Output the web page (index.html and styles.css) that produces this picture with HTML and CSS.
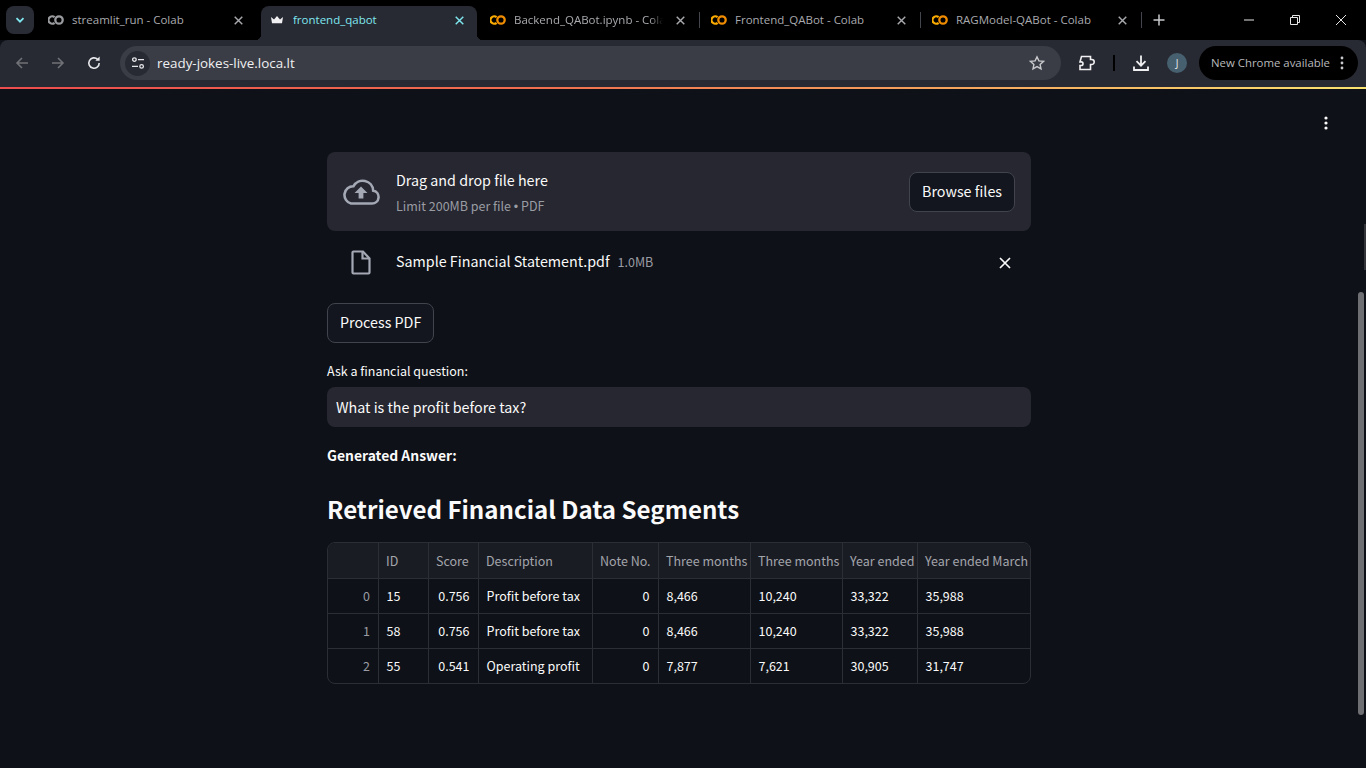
FILE: index.html
```html
<!DOCTYPE html>
<html lang="en">
<head>
    <meta charset="UTF-8">
    <meta name="viewport" content="width=device-width, initial-scale=1.0">
    <title>frontend_qabot</title>
    <link rel="stylesheet" href="styles.css">
</head>
<body>
    <div class="tabstrip">
        <button class="tab-search">
            <svg width="12" height="12" viewBox="0 0 12 12"><path d="M2.500 4.200 6 7.700l3.500-3.500" fill="none" stroke="#7fe7f0" stroke-width="1.800"/></svg>
        </button>
        <div class="tab">
            <svg class="colab" width="16" height="16" viewBox="0 0 16 10"><g fill="none" stroke="#9a9b9f" stroke-width="2.300"><path d="M6.600 2.200A3.700 3.700 0 1 0 6.600 7.800"/><circle cx="11" cy="5" r="3.700"/></g></svg>
            <span class="tab-title">streamlit_run - Colab</span>
            <svg class="tab-x" width="9" height="9" viewBox="0 0 10 10"><path d="M.8.800l8.400 8.400M9.200.800.800 9.200" stroke="#a9aaae" stroke-width="1.600"/></svg>
        </div>
        <div class="tab active">
            <svg class="crown" width="14" height="14" viewBox="0 0 14 14"><path d="M1 4l3 2.600L7 3l3 3.600L13 4l-1 6.200H2z" fill="#f0f0f2"/></svg>
            <span class="tab-title">frontend_qabot</span>
            <svg class="tab-x" width="9" height="9" viewBox="0 0 10 10"><path d="M.8.800l8.400 8.400M9.200.800.800 9.200" stroke="#7fe7f0" stroke-width="1.600"/></svg>
        </div>
        <div class="tab sep">
            <svg class="colab" width="16" height="16" viewBox="0 0 16 10"><g fill="none" stroke-width="2.300"><path d="M6.600 2.200A3.700 3.700 0 1 0 6.600 7.800" stroke="#f9ab00"/><circle cx="11" cy="5" r="3.700" stroke="#f08c00"/></g></svg>
            <span class="tab-title fade">Backend_QABot.ipynb - Colab</span>
            <svg class="tab-x" width="9" height="9" viewBox="0 0 10 10"><path d="M.8.800l8.400 8.400M9.200.800.800 9.200" stroke="#a9aaae" stroke-width="1.600"/></svg>
        </div>
        <div class="tab sep">
            <svg class="colab" width="16" height="16" viewBox="0 0 16 10"><g fill="none" stroke-width="2.300"><path d="M6.600 2.200A3.700 3.700 0 1 0 6.600 7.800" stroke="#f9ab00"/><circle cx="11" cy="5" r="3.700" stroke="#f08c00"/></g></svg>
            <span class="tab-title">Frontend_QABot - Colab</span>
            <svg class="tab-x" width="9" height="9" viewBox="0 0 10 10"><path d="M.8.800l8.400 8.400M9.200.800.800 9.200" stroke="#a9aaae" stroke-width="1.600"/></svg>
        </div>
        <div class="tab sep">
            <svg class="colab" width="16" height="16" viewBox="0 0 16 10"><g fill="none" stroke-width="2.300"><path d="M6.600 2.200A3.700 3.700 0 1 0 6.600 7.800" stroke="#f9ab00"/><circle cx="11" cy="5" r="3.700" stroke="#f08c00"/></g></svg>
            <span class="tab-title">RAGModel-QABot - Colab</span>
            <svg class="tab-x" width="9" height="9" viewBox="0 0 10 10"><path d="M.8.800l8.400 8.400M9.200.800.800 9.200" stroke="#a9aaae" stroke-width="1.600"/></svg>
        </div>
        <svg class="new-tab" width="12" height="12" viewBox="0 0 12 12"><path d="M6 .5v11M.5 6h11" stroke="#c8c9cc" stroke-width="1.500"/></svg>
        <div class="win-btns">
            <svg width="12" height="12" viewBox="0 0 12 12"><path d="M1 6h10" stroke="#e6e6e6" stroke-width="1"/></svg>
            <svg width="12" height="12" viewBox="0 0 12 12"><path d="M1.500 3.500h7v7h-7zM3.500 3.500v-2h7v7h-2" fill="none" stroke="#e6e6e6" stroke-width="1"/></svg>
            <svg width="12" height="12" viewBox="0 0 12 12"><path d="M1 1l10 10M11 1 1 11" stroke="#e6e6e6" stroke-width="1"/></svg>
        </div>
    </div>

    <div class="toolbar">
        <svg class="nav" width="16" height="16" viewBox="0 0 16 16"><path d="M14 8H3M8 3 3 8l5 5" fill="none" stroke="#6f7177" stroke-width="1.600"/></svg>
        <svg class="nav" width="16" height="16" viewBox="0 0 16 16"><path d="M2 8h11M8 3l5 5-5 5" fill="none" stroke="#6f7177" stroke-width="1.600"/></svg>
        <svg class="nav" width="16" height="16" viewBox="0 0 16 16"><path d="M13.200 8A5.200 5.200 0 1 1 11.600 4.300" fill="none" stroke="#e6e7ea" stroke-width="1.600"/><path d="M13.600 1.600v4.200H9.400z" fill="#e6e7ea"/></svg>
        <div class="omnibox">
            <span class="site-info">
                <svg width="14" height="14" viewBox="0 0 14 14"><g fill="none" stroke="#e6e7ea" stroke-width="1.300"><circle cx="3.400" cy="3.600" r="1.800"/><circle cx="10.600" cy="10.400" r="1.800"/><path d="M7 3.600h6M1 10.400h6"/></g></svg>
            </span>
            <span class="url">ready-jokes-live.loca.lt</span>
            <svg class="star" width="16" height="16" viewBox="0 0 16 16"><path d="M8 1.800l1.900 4.100 4.500.5-3.300 3 .9 4.400L8 11.600l-4 2.200.9-4.400-3.300-3 4.500-.5z" fill="none" stroke="#c8c9cc" stroke-width="1.400"/></svg>
        </div>
        <svg class="ext" width="18" height="18" viewBox="0 0 18 18"><path d="M3.500 2.500h9v3h1.200a2.300 2.300 0 0 1 0 5H12.500v5H2v-4h1.200a1.800 1.800 0 0 0 0-3.600H2z" fill="none" stroke="#f0f0f2" stroke-width="1.600"/></svg>
        <span class="tool-sep"></span>
        <svg class="download" width="18" height="18" viewBox="0 0 18 18"><path d="M9 1.500v10M4.500 7.200 9 11.700l4.500-4.500M2 12.500v3.500h14v-3.500" fill="none" stroke="#f0f0f2" stroke-width="1.800"/></svg>
        <span class="avatar">J</span>
        <div class="update-pill">
            <span>New Chrome available</span>
            <svg width="4" height="14" viewBox="0 0 4 14"><circle cx="2" cy="2" r="1.400" fill="#c8c9cc"/><circle cx="2" cy="7" r="1.400" fill="#c8c9cc"/><circle cx="2" cy="12" r="1.400" fill="#c8c9cc"/></svg>
        </div>
    </div>
    <div class="load-line"></div>

    <div class="app">
        <svg class="app-menu" width="4" height="14" viewBox="0 0 4 14"><circle cx="2" cy="2" r="1.600" fill="#fafafa"/><circle cx="2" cy="7" r="1.600" fill="#fafafa"/><circle cx="2" cy="12" r="1.600" fill="#fafafa"/></svg>
        <div class="scroll-track"></div>
        <div class="scroll-thumb"></div>

        <main class="main">
            <section class="dropzone">
                <svg class="cloud" width="38" height="28" viewBox="0 0 38 28"><path d="M9 25.500h21a6.500 6.500 0 0 0 1.200-12.900A10.500 10.500 0 0 0 11.500 8.200 8.800 8.800 0 0 0 9 25.500z" fill="none" stroke="#a3a8b4" stroke-width="2.600"/><path d="M19 8.500l6.500 6.500H21.400v5.500h-4.800V15h-4.100z" fill="#a3a8b4"/></svg>
                <div class="drop-text">
                    <div class="drop-title">Drag and drop file here</div>
                    <div class="drop-limit">Limit 200MB per file <span class="dot">&bull;</span> PDF</div>
                </div>
                <button class="btn">Browse files</button>
            </section>

            <div class="file-row">
                <svg class="file-icon" width="20" height="25" viewBox="0 0 20 25"><path d="M2.500 1.500h9.500l6.500 7v14a1 1 0 0 1-1 1h-15a1 1 0 0 1-1-1v-20a1 1 0 0 1 1-1z" fill="none" stroke="#a3a8b4" stroke-width="2.200"/><path d="M11.500 2v6.500h6.500" fill="none" stroke="#a3a8b4" stroke-width="2.200"/></svg>
                <span class="file-name">Sample Financial Statement.pdf</span>
                <span class="file-size">1.0MB</span>
                <svg class="file-x" width="12" height="12" viewBox="0 0 12 12"><path d="M1 1l10 10M11 1 1 11" stroke="#fafafa" stroke-width="1.700"/></svg>
            </div>

            <button class="btn process">Process PDF</button>

            <label class="q-label" for="question">Ask a financial question:</label>
            <input class="q-input" id="question" type="text" value="What is the profit before tax?">

            <p class="answer-head">Generated Answer:</p>

            <h2 class="segments-head">Retrieved Financial Data Segments</h2>

            <div class="frame">
                <div class="cell head"></div>
                <div class="cell head">ID</div>
                <div class="cell head">Score</div>
                <div class="cell head">Description</div>
                <div class="cell head">Note No.</div>
                <div class="cell head">Three months</div>
                <div class="cell head">Three months</div>
                <div class="cell head">Year ended</div>
                <div class="cell head">Year ended March</div>

                <div class="cell idx">0</div>
                <div class="cell">15</div>
                <div class="cell num">0.756</div>
                <div class="cell">Profit before tax</div>
                <div class="cell num">0</div>
                <div class="cell">8,466</div>
                <div class="cell">10,240</div>
                <div class="cell">33,322</div>
                <div class="cell">35,988</div>

                <div class="cell idx">1</div>
                <div class="cell">58</div>
                <div class="cell num">0.756</div>
                <div class="cell">Profit before tax</div>
                <div class="cell num">0</div>
                <div class="cell">8,466</div>
                <div class="cell">10,240</div>
                <div class="cell">33,322</div>
                <div class="cell">35,988</div>

                <div class="cell idx last">2</div>
                <div class="cell last">55</div>
                <div class="cell num last">0.541</div>
                <div class="cell last">Operating profit</div>
                <div class="cell num last">0</div>
                <div class="cell last">7,877</div>
                <div class="cell last">7,621</div>
                <div class="cell last">30,905</div>
                <div class="cell last">31,747</div>
            </div>
        </main>
    </div>
</body>
</html>
```
FILE: styles.css
```css
* {
    box-sizing: border-box;
}
html, body {
    margin: 0;
    height: 768px;
    overflow: hidden;
    background-color: #0e1117;
}
body {
    font-family: "Noto Sans CJK SC", "Noto Sans", sans-serif;
    color: #fafafa;
}

/* browser chrome */
.tabstrip {
    height: 40px;
    background-color: #000;
    display: flex;
    align-items: flex-end;
    padding-left: 6px;
    font-family: "Open Sans", "Noto Sans", sans-serif;
    font-size: 11.5px;
}
.tab-search {
    width: 28px;
    height: 28px;
    margin-right: 1px;
    margin-bottom: 6px;
    border: none;
    border-radius: 8px;
    background-color: #2a2c35;
    display: flex;
    align-items: center;
    justify-content: center;
    padding: 0;
}
.tab {
    width: 221px;
    height: 34px;
    padding: 0 13px 6px 13px;
    display: flex;
    align-items: center;
    position: relative;
    color: #a9aaae;
}
.tab.sep::after {
    content: "";
    position: absolute;
    right: -2px;
    top: 6px;
    height: 16px;
    width: 1px;
    background-color: #44464d;
}
.tab.active {
    color: #7fe7f0;
    background-color: #282a33;
    border-radius: 8px 8px 0 0;
    width: 216px;
    margin-left: 5px;
    padding-left: 9px;
    padding-right: 13px;
}
.tab.active::before,
.tab.active::after {
    content: "";
    position: absolute;
    bottom: 0;
    width: 6px;
    height: 6px;
}
.tab.active::before {
    left: -6px;
    background: radial-gradient(circle at 0 0, transparent 6px, #282a33 6.5px);
}
.tab.active::after {
    right: -6px;
    background: radial-gradient(circle at 100% 0, transparent 6px, #282a33 6.5px);
}
.tab .colab, .tab .crown {
    flex: none;
    margin-right: 8px;
}
.tab .crown {
    margin-right: 9px;
}
.tab-title {
    flex: 1;
    white-space: nowrap;
    overflow: hidden;
    margin-bottom: 1px;
}
.tab-title.fade {
    -webkit-mask-image: linear-gradient(to right, #000 84%, transparent 92%);
    mask-image: linear-gradient(to right, #000 84%, transparent 92%);
}
.tab-x {
    flex: none;
}
.new-tab {
    margin: 0 0 14px 13px;
}
.win-btns {
    margin-left: auto;
    margin-bottom: 14px;
    display: flex;
    gap: 34px;
    padding-right: 19px;
}
.toolbar {
    height: 47px;
    background-color: #282a33;
    border-radius: 8px 8px 0 0;
    display: flex;
    align-items: center;
    padding: 0 8px 1px 14px;
    font-family: "Open Sans", "Noto Sans", sans-serif;
}
.nav {
    margin-right: 20px;
    flex: none;
}
.omnibox {
    flex: none;
    width: 941px;
    height: 34px;
    margin-left: -2px;
    border-radius: 17px;
    background-color: #3a3d46;
    display: flex;
    align-items: center;
    padding: 0 16px 0 5px;
}
.site-info {
    width: 25px;
    height: 25px;
    border-radius: 50%;
    background-color: #282a33;
    display: flex;
    align-items: center;
    justify-content: center;
}
.url {
    margin-left: 7px;
    font-size: 13.4px;
    color: #f0f0f2;
    flex: 1;
}
.ext {
    margin-left: 17px;
    flex: none;
}
.tool-sep {
    flex: none;
    width: 2px;
    height: 16px;
    margin: 0 17px 0 17px;
    background-color: #000;
}
.download {
    flex: none;
}
.avatar {
    flex: none;
    width: 20px;
    height: 20px;
    margin-left: 17px;
    border-radius: 50%;
    background-color: #46606f;
    color: #e6e7ea;
    font-size: 10px;
    display: flex;
    align-items: center;
    justify-content: center;
}
.update-pill {
    flex: none;
    width: 159px;
    height: 34px;
    margin-left: 12px;
    border-radius: 17px;
    background-color: #000;
    color: #b8b9bc;
    font-size: 11.4px;
    display: flex;
    align-items: center;
    justify-content: space-between;
    padding: 0 14px 0 12px;
}
.update-pill span {
    margin-bottom: 2px;
}
.load-line {
    height: 2px;
    background: linear-gradient(to right, #ee4d4d 0%, #f0704f 40%, #f6a55e 70%, #fbe36f 100%);
}

/* streamlit page */
.app {
    position: relative;
    height: 679px;
    background-color: #0e1117;
}
.app-menu {
    position: absolute;
    top: 27px;
    right: 38px;
}
.scroll-track {
    position: absolute;
    right: 0;
    top: 135px;
    width: 2px;
    height: 46px;
    background-color: #33353a;
}
.scroll-thumb {
    position: absolute;
    right: 2px;
    top: 203px;
    width: 6px;
    height: 423px;
    border-radius: 3px;
    background-color: #6e6f73;
}
.main {
    width: 704px;
    margin-left: 327px;
    padding-top: 63px;
}
.dropzone {
    height: 79px;
    border-radius: 8px;
    background-color: #262730;
    display: flex;
    align-items: center;
    padding: 0 16px 0 15px;
}
.cloud {
    flex: none;
    margin-right: 16px;
}
.drop-text {
    flex: 1;
    padding-top: 2px;
}
.drop-title {
    font-size: 14.300px;
    line-height: 24px;
}
.drop-limit {
    font-size: 12.500px;
    line-height: 20px;
    margin-top: 4px;
    color: #9a9ca3;
}
.dot {
    font-family: "Liberation Sans", sans-serif;
}
.btn {
    font-family: inherit;
    font-size: 14.300px;
    line-height: 24px;
    color: #fafafa;
    height: 40px;
    padding: 0 12px 2px;
    border: 1px solid #41444c;
    border-radius: 8px;
    background-color: #13161e;
}
.file-row {
    height: 52px;
    margin-top: 5px;
    display: flex;
    align-items: center;
    padding: 0 20px 0 24px;
}
.file-icon {
    flex: none;
    margin-right: 25px;
}
.file-name {
    font-size: 14.300px;
    line-height: 24px;
    margin-bottom: 2px;
}
.file-size {
    font-size: 12.500px;
    color: #9a9ca3;
    margin-left: 8px;
    margin-bottom: 2px;
    flex: 1;
}
.file-x {
    margin-top: 2px;
}
.process {
    display: block;
    margin-top: 15px;
}
.q-label {
    display: block;
    font-size: 12.500px;
    line-height: 20px;
    margin-top: 18px;
}
.q-input {
    display: block;
    width: 100%;
    height: 40px;
    margin-top: 6px;
    border: none;
    border-radius: 8px;
    outline: none;
    background-color: #262730;
    color: #fafafa;
    font-family: inherit;
    font-size: 14.300px;
    padding: 0 9px 2px;
}
.answer-head {
    margin: 16px 0 0;
    font-size: 13.900px;
    line-height: 24px;
    font-weight: 700;
}
.segments-head {
    margin: 22px 0 0;
    font-size: 24.100px;
    line-height: 40px;
    font-weight: 700;
}
.frame {
    margin-top: 13px;
    height: 142px;
    border: 1px solid #2c2e36;
    border-radius: 8px;
    overflow: hidden;
    display: grid;
    grid-template-columns: 51px 50px 50px 114px 66px 92px 92px 75px 1fr;
    grid-template-rows: 36px 35px 35px 34px;
    font-size: 12.500px;
    line-height: 16px;
}
.cell {
    padding: 0 8px 0 7.500px;
    display: flex;
    align-items: center;
    white-space: nowrap;
    overflow: hidden;
    border-right: 1px solid #2c2e36;
    border-bottom: 1px solid #2c2e36;
}
.cell:nth-child(9n) {
    border-right: none;
}
.cell.last {
    border-bottom: none;
}
.head {
    background-color: #1a1c24;
    color: #a3a5ab;
    font-size: 12.500px;
    padding: 0 7px;
}
.num {
    justify-content: flex-end;
    padding-right: 8.500px;
}
.idx {
    justify-content: flex-end;
    color: #9a9ca3;
}
```
